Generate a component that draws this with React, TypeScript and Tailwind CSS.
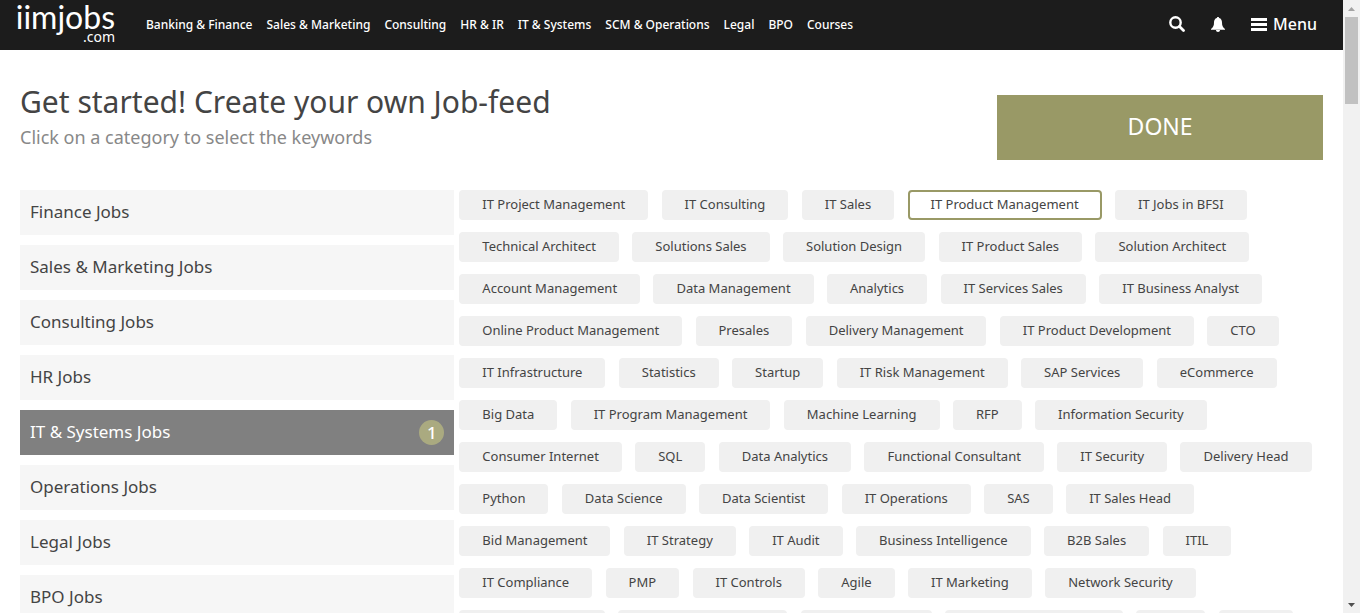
const navLinks = [
  'Banking & Finance',
  'Sales & Marketing',
  'Consulting',
  'HR & IR',
  'IT & Systems',
  'SCM & Operations',
  'Legal',
  'BPO',
  'Courses',
];

const categories: { name: string; selected?: number }[] = [
  { name: 'Finance Jobs' },
  { name: 'Sales & Marketing Jobs' },
  { name: 'Consulting Jobs' },
  { name: 'HR Jobs' },
  { name: 'IT & Systems Jobs', selected: 1 },
  { name: 'Operations Jobs' },
  { name: 'Legal Jobs' },
  { name: 'BPO Jobs' },
];

const keywords = [
  'IT Project Management', 'IT Consulting', 'IT Sales', 'IT Product Management', 'IT Jobs in BFSI',
  'Technical Architect', 'Solutions Sales', 'Solution Design', 'IT Product Sales', 'Solution Architect',
  'Account Management', 'Data Management', 'Analytics', 'IT Services Sales', 'IT Business Analyst',
  'Online Product Management', 'Presales', 'Delivery Management', 'IT Product Development', 'CTO',
  'IT Infrastructure', 'Statistics', 'Startup', 'IT Risk Management', 'SAP Services', 'eCommerce',
  'Big Data', 'IT Program Management', 'Machine Learning', 'RFP', 'Information Security',
  'Consumer Internet', 'SQL', 'Data Analytics', 'Functional Consultant', 'IT Security', 'Delivery Head',
  'Python', 'Data Science', 'Data Scientist', 'IT Operations', 'SAS', 'IT Sales Head',
  'Bid Management', 'IT Strategy', 'IT Audit', 'Business Intelligence', 'B2B Sales', 'ITIL',
  'IT Compliance', 'PMP', 'IT Controls', 'Agile', 'IT Marketing', 'Network Security',
  'Channel Partner', 'Enterprise Solutions', 'Channel Sales', 'Software Engineering', 'ERP', 'CRM',
];

function SearchIcon() {
  return (
    <svg viewBox="0 0 16 16" className="size-4" fill="none" stroke="currentColor" aria-hidden="true">
      <circle cx="6.500" cy="6.500" r="5.200" strokeWidth="2.400" />
      <path d="M10.500 10.500l4 4" strokeWidth="2.800" strokeLinecap="round" />
    </svg>
  );
}

function BellIcon() {
  return (
    <svg viewBox="0 0 14 15" className="h-[15px] w-[14px]" fill="currentColor" aria-hidden="true">
      <path d="M7 0c.8 0 1.100.5 1.100 1.100C10.200 1.600 11 3.500 11 5.500c0 3.200.8 4.800 3 6.500v.800H0V12c2.200-1.700 3-3.300 3-6.500 0-2 .8-3.900 2.900-4.400C5.900.5 6.200 0 7 0z" />
      <path d="M5 13h4c0 1.200-.8 2-2 2s-2-.8-2-2z" />
    </svg>
  );
}

function BarsIcon() {
  return (
    <svg viewBox="0 0 16 13" className="h-[13px] w-4" fill="currentColor" aria-hidden="true">
      <path d="M0 0h16v3H0zM0 5h16v3H0zM0 10h16v3H0z" />
    </svg>
  );
}

function Header() {
  return (
    <header className="flex h-[50px] items-center bg-[#1c1c1c] pr-[26px] pb-0.5 pl-4 text-white">
      <a href="#" aria-label="iimjobs.com" className="flex w-[99px] shrink-0 flex-col items-end pb-0.5">
        <span className="font-['Lato',sans-serif] text-[32px] leading-8">iimjobs</span>
        <span className="-mt-1 text-sm leading-4">.com</span>
      </a>
      <nav className="ml-[31px] flex gap-[14px] pt-0.5 text-xs leading-5 font-medium whitespace-nowrap">
        {navLinks.map((link) => (
          <a key={link} href="#">{link}</a>
        ))}
      </nav>
      <div className="ml-auto flex items-center">
        <button type="button" aria-label="Search"><SearchIcon /></button>
        <button type="button" aria-label="Notifications" className="ml-[26px]"><BellIcon /></button>
        <button type="button" className="ml-[26px] flex items-center gap-1.5 text-base font-medium">
          <BarsIcon />
          Menu
        </button>
      </div>
    </header>
  );
}

function Scrollbar() {
  return (
    <div aria-hidden="true" className="flex w-[17px] shrink-0 flex-col items-center bg-[#f1f1f1]">
      <div className="flex h-[17px] items-center">
        <svg viewBox="0 0 7 4" className="h-1 w-[7px]" fill="#a3a3a3"><path d="M0 4L3.500 0 7 4z" /></svg>
      </div>
      <div className="h-[87px] w-[13px] bg-[#c1c1c1]" />
      <div className="mt-auto flex h-[17px] items-center">
        <svg viewBox="0 0 7 4" className="h-1 w-[7px]" fill="#505050"><path d="M0 0L3.500 4 7 0z" /></svg>
      </div>
    </div>
  );
}

export default function App() {
  return (
    <div className="flex h-screen overflow-hidden bg-white font-['Noto_Sans',sans-serif] text-[#444]">
      <div className="min-w-0 flex-1">
        <Header />
        <main className="px-5">
          <div className="flex items-start justify-between pt-[34px]">
            <div>
              <h1 className="text-[30px] leading-9">Get started! Create your own Job-feed</h1>
              <p className="text-lg leading-[34px] text-[#888]">Click on a category to select the keywords</p>
            </div>
            <button type="button" className="mt-[11px] h-[65px] w-1/4 bg-[#999966] pb-[3px] text-[23px] text-white">DONE</button>
          </div>
          <div className="mt-[30px] flex items-start">
            <ul className="w-1/3 shrink-0 space-y-2.5">
              {categories.map(({ name, selected }) => (
                <li key={name}>
                  <button
                    type="button"
                    className={`flex h-[45px] w-full items-center justify-between px-2.5 text-left text-[17px] ${
                      selected ? 'bg-[#808080] text-white' : 'bg-[#f6f6f6]'
                    }`}
                  >
                    <span className="pb-0.5">{name}</span>
                    {selected && (
                      <span className="flex size-[25px] items-center justify-center rounded-full bg-[#aaaa80] font-medium">
                        {selected}
                      </span>
                    )}
                  </button>
                </li>
              ))}
            </ul>
            <div className="min-w-0 flex-1 text-[13px] leading-4">
              {keywords.map((keyword) => (
                <span key={keyword}>
                  <button
                    type="button"
                    className={`mx-[5px] mb-3 inline-block h-[30px] rounded border-2 px-[21px] pb-0.5 align-top ${
                      keyword === 'IT Product Management' ? 'border-[#999966] bg-white' : 'border-[#f0f0f0] bg-[#f0f0f0]'
                    }`}
                  >
                    {keyword}
                  </button>{' '}
                </span>
              ))}
            </div>
          </div>
        </main>
      </div>
      <Scrollbar />
    </div>
  );
}
